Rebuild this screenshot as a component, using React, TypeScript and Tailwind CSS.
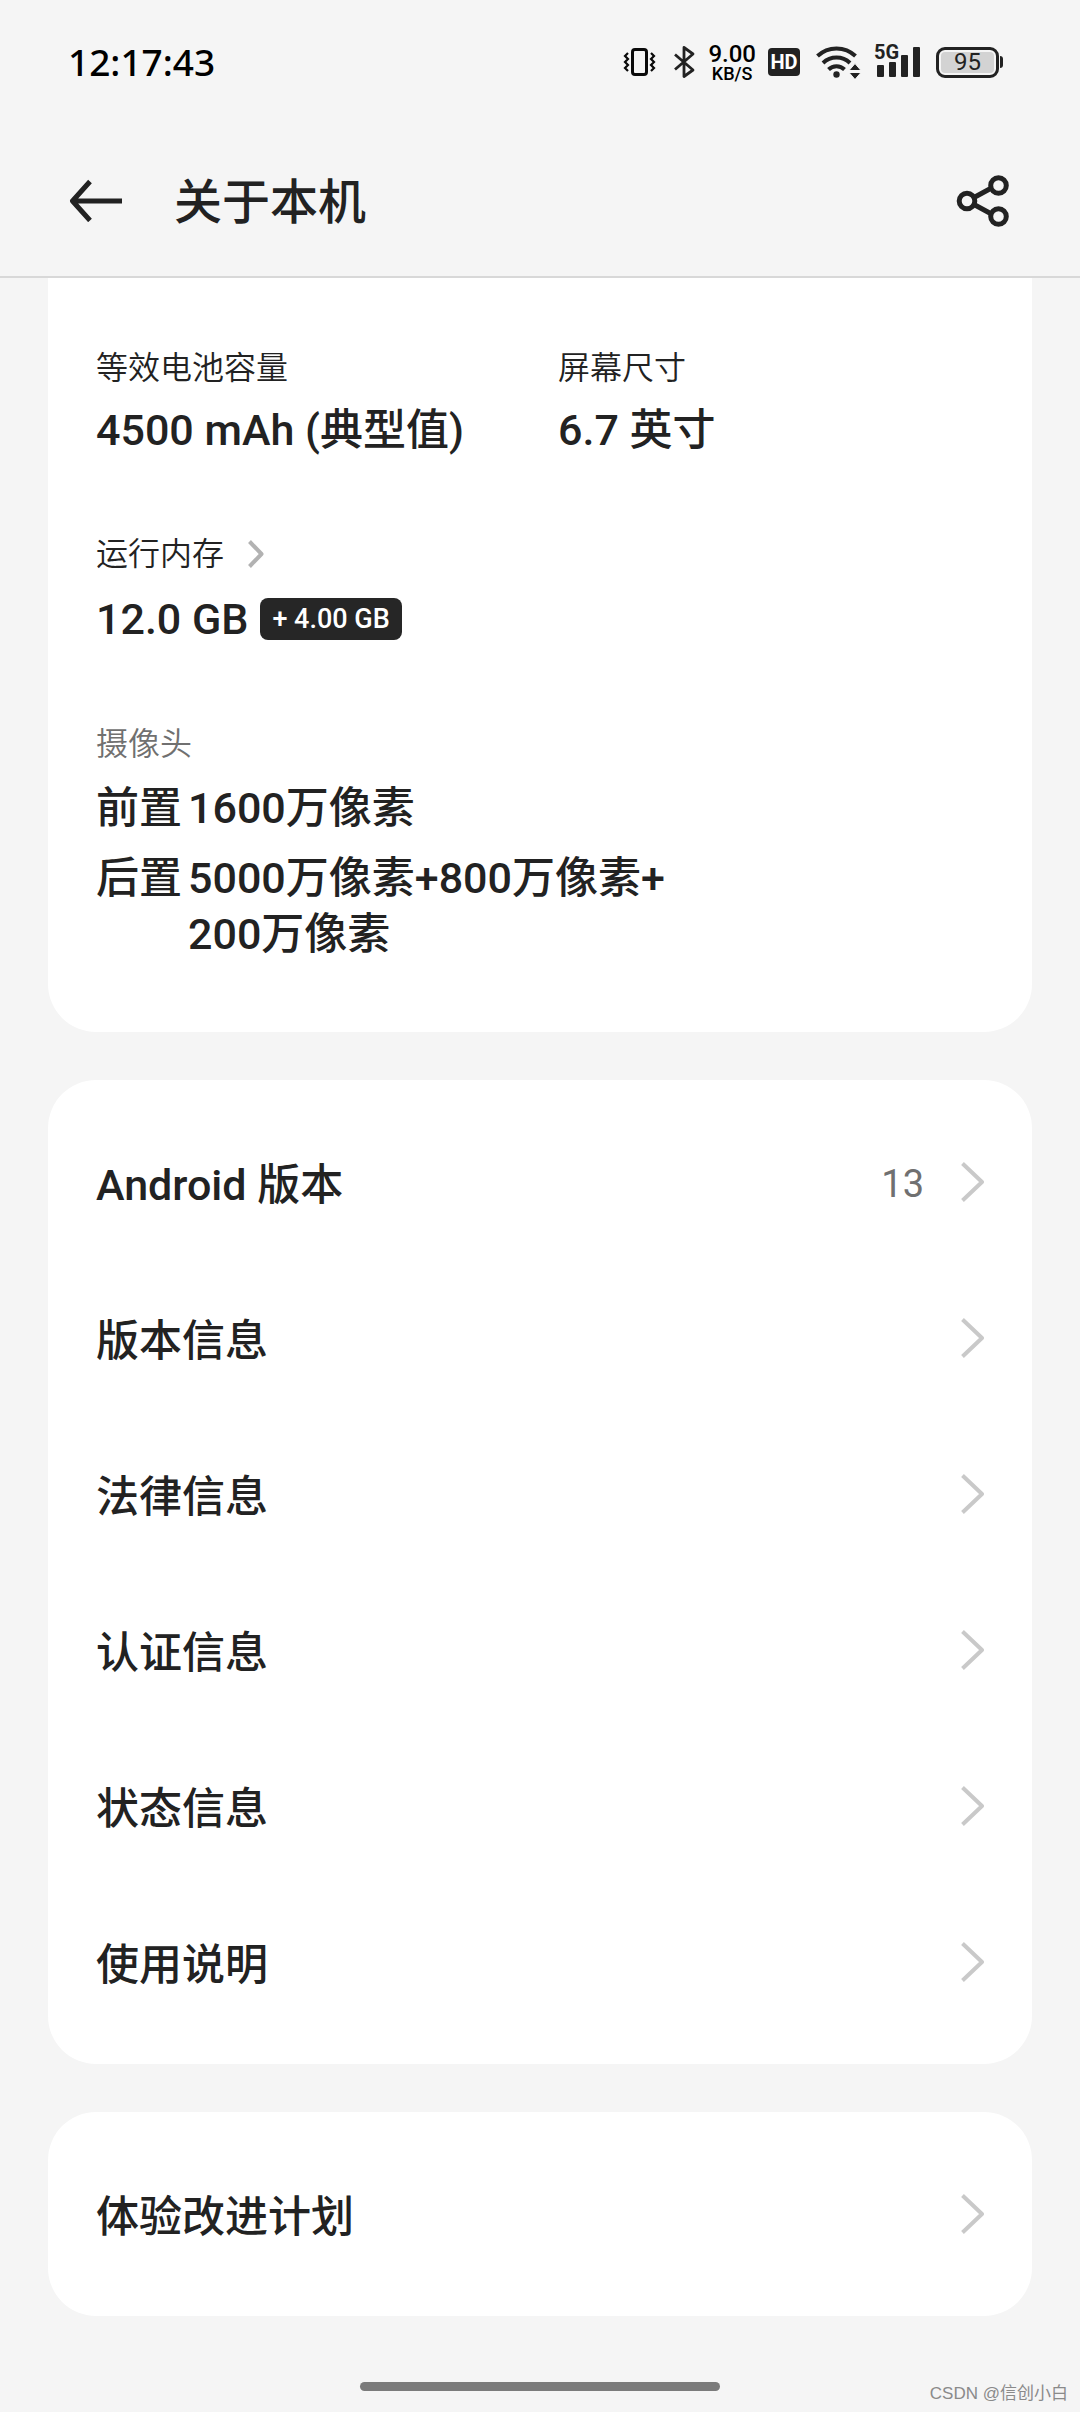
import type { ReactNode } from "react";

function VibrateIcon() {
  return (
    <svg width="37" height="34" viewBox="0 0 37 34" fill="none" stroke="#0a0a0a" aria-hidden="true">
      <rect x="9.5" y="4.5" width="14" height="25" rx="2.5" strokeWidth="3" />
      <path d="M5 8 2 11 5 14 2 17 5 20 2 23 5 26M28 8 31 11 28 14 31 17 28 20 31 23 28 26" strokeWidth="2.2" />
    </svg>
  );
}

function BluetoothIcon() {
  return (
    <svg width="24" height="34" viewBox="0 0 24 34" fill="none" stroke="#222" strokeWidth="2.8" strokeLinejoin="round" aria-hidden="true">
      <path d="M3 9.5 21 25 12 31.5V2.5L21 9 3 24.5" />
    </svg>
  );
}

function WifiIcon() {
  return (
    <svg width="50" height="34" viewBox="0 0 50 34" fill="none" stroke="#222" strokeWidth="4" aria-hidden="true">
      <path d="M5.5 11a27.5 27.5 0 0 1 38 0" />
      <path d="M11 18a19.5 19.5 0 0 1 27 0" />
      <path d="M16.5 24.5a11.5 11.5 0 0 1 16 0" />
      <circle cx="24.5" cy="29.5" r="3.2" fill="#222" stroke="none" />
      <path d="M43 18.5 49 25.5H37zM43 34.5 37 27.5H49z" fill="#222" stroke="#f5f5f5" strokeWidth="1" />
    </svg>
  );
}

function SignalIcon() {
  return (
    <span className="relative block h-[34px] w-[50px]">
      <svg width="50" height="34" viewBox="0 0 50 34" fill="#222" aria-hidden="true">
        <rect x="3" y="20" width="7" height="12" rx="1" />
        <rect x="15" y="17" width="7" height="15" rx="1" />
        <rect x="27" y="10" width="7" height="22" rx="1" />
        <rect x="39" y="2" width="7" height="30" rx="1" />
      </svg>
      <span className="absolute -top-1 left-0 text-[20px] leading-[22px] font-bold text-[#222]">5G</span>
    </span>
  );
}

function Battery({ level }: { level: number }) {
  return (
    <span className="flex items-center gap-px">
      <span className="flex h-[31px] w-[63px] rounded-[9px] border-[3px] border-[#222] p-0.5">
        <span className="flex flex-1 items-center justify-center rounded-[4px] bg-[#d3d3d3] text-[24px] leading-none text-[#222]">
          {level}
        </span>
      </span>
      <span className="h-3 w-[3px] rounded-r-sm bg-[#222]" />
    </span>
  );
}

function Chevron({ small = false }: { small?: boolean }) {
  return small ? (
    <svg width="16" height="28" viewBox="0 0 16 28" fill="none" stroke="#b2b2b2" strokeWidth="4" aria-hidden="true">
      <path d="M1.5 1.5 13.5 14 1.5 26.5" strokeLinejoin="round" />
    </svg>
  ) : (
    <svg width="24" height="42" viewBox="0 0 24 42" fill="none" stroke="#c9c9c9" strokeWidth="4" aria-hidden="true">
      <path d="M2.5 2.5 22 21 2.5 39.5" strokeLinejoin="round" />
    </svg>
  );
}

function StatusBar() {
  return (
    <div className="flex h-[124px] items-center justify-between pr-[77px] pl-[68px]">
      <time className="font-['Noto_Sans','Noto_Sans_CJK_SC',sans-serif] text-[37px] font-medium text-black">12:17:43</time>
      <div className="flex items-center gap-3">
        <VibrateIcon />
        <BluetoothIcon />
        <span className="flex flex-col items-center font-medium text-black">
          <span className="text-[24px] leading-[24px]">9.00</span>
          <span className="text-[18px] leading-[16px]">KB/S</span>
        </span>
        <span className="flex h-7 w-8 items-center justify-center rounded-[4px] bg-[#222] text-[20px] font-bold text-white">
          HD
        </span>
        <WifiIcon />
        <SignalIcon />
        <Battery level={95} />
      </div>
    </div>
  );
}

function TitleBar() {
  return (
    <div className="flex h-[152px] items-center pr-[68px] pl-[68px]">
      <button type="button" aria-label="返回">
        <svg width="56" height="44" viewBox="0 0 56 44" fill="none" stroke="#222" strokeWidth="5" aria-hidden="true">
          <path d="M22 3.5 4.5 23 22 42.5M4 23H54" strokeLinejoin="round" />
        </svg>
      </button>
      <h1 className="ml-[50px] flex-1 pt-1.5 text-[48px] font-medium">关于本机</h1>
      <button type="button" aria-label="分享">
        <svg width="56" height="56" viewBox="0 0 56 56" fill="none" stroke="#222" strokeWidth="5" aria-hidden="true">
          <circle cx="11" cy="29" r="7.8" />
          <circle cx="42.5" cy="13.5" r="7.8" />
          <circle cx="42.5" cy="44.5" r="7.8" />
          <path d="M18 25.5 35.5 16M18 32.5 35.5 42" />
        </svg>
      </button>
    </div>
  );
}

function Spec({ label, children }: { label: ReactNode; children: ReactNode }) {
  return (
    <div>
      <dt className="flex h-12 items-center text-[32px] font-[350]">{label}</dt>
      <dd className="mt-[10px] flex h-14 items-center text-[43px] font-medium">{children}</dd>
    </div>
  );
}

function Row({ title, value }: { title: string; value?: string }) {
  return (
    <li>
      <button type="button" className="flex h-[156px] w-full items-center text-left">
        <span className="flex-1 pt-1.5 text-[43px] font-medium">{title}</span>
        {value && <span className="mr-9 pt-1 text-[38px] text-[#707070]">{value}</span>}
        <Chevron />
      </button>
    </li>
  );
}

const infoRows = [
  { title: "Android 版本", value: "13" },
  { title: "版本信息" },
  { title: "法律信息" },
  { title: "认证信息" },
  { title: "状态信息" },
  { title: "使用说明" },
];

export default function App() {
  return (
    <div className="relative flex min-h-screen flex-col bg-[#f5f5f5] font-[Roboto,'Noto_Sans_CJK_SC',sans-serif] text-[#222]">
      <header className="border-b-2 border-[#d8d8d8]">
        <StatusBar />
        <TitleBar />
      </header>

      <main className="flex flex-col gap-12 px-12">
        <section className="rounded-b-[48px] bg-white px-12 pt-[66px] pb-[70px]">
          <dl className="grid grid-cols-2 gap-x-9">
            <Spec label="等效电池容量">4500 mAh (典型值)</Spec>
            <Spec label="屏幕尺寸">6.7 英寸</Spec>
          </dl>
          <dl className="mt-[72px]">
            <Spec
              label={
                <button type="button" className="flex items-center gap-6">
                  运行内存
                  <Chevron small />
                </button>
              }
            >
              <span className="flex items-center pt-1.5">
                12.0 GB
                <span className="ml-3 flex h-[42px] items-center rounded-lg bg-[#262626] px-3 text-[27px] text-white">
                  + 4.00 GB
                </span>
              </span>
            </Spec>
          </dl>
          <h2 className="mt-[76px] text-[32px] leading-[48px] font-[350] text-[#707070]">摄像头</h2>
          <dl className="mt-3 grid grid-cols-[auto_1fr] gap-x-[6px] gap-y-[14px] text-[43px] leading-[56px] font-medium">
            <dt>前置</dt>
            <dd>1600万像素</dd>
            <dt>后置</dt>
            <dd>
              5000万像素+800万像素+
              <br />
              200万像素
            </dd>
          </dl>
        </section>

        <ul className="rounded-[48px] bg-white px-12 py-6">
          {infoRows.map((row) => (
            <Row key={row.title} {...row} />
          ))}
        </ul>

        <ul className="rounded-[48px] bg-white px-12 py-6">
          <Row title="体验改进计划" />
        </ul>
      </main>

      <footer className="mt-auto flex h-24 items-end justify-center pb-[21px]">
        <div className="h-[9px] w-1/3 rounded-full bg-[#7b7b7b]" />
        <span className="absolute right-3 bottom-[6px] font-['Liberation_Sans','Noto_Sans_CJK_SC',sans-serif] text-[17px] leading-[24px] text-[#8a8a8a]">
          CSDN @信创小白
        </span>
      </footer>
    </div>
  );
}
